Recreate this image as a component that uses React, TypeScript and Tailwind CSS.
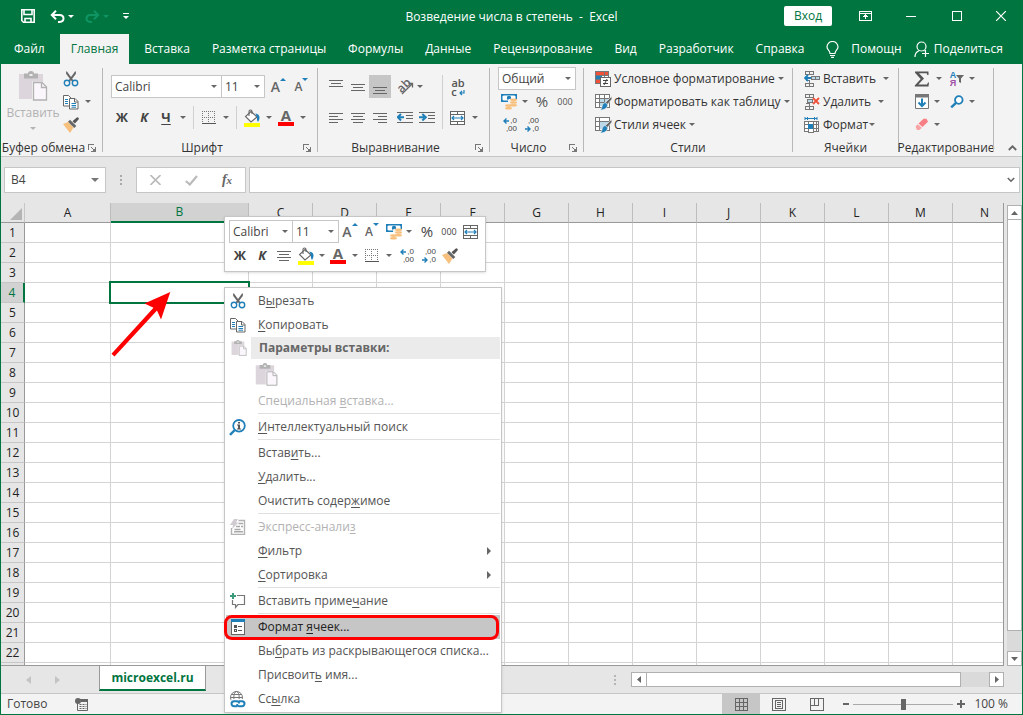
import React from 'react'
import clsx from 'clsx'

const columns = ['A', 'B', 'C', 'D', 'E', 'F', 'G', 'H', 'I', 'J', 'K', 'L', 'M', 'N']
const rows = Array.from({ length: 22 }, (_, i) => i + 1)

const ribbonTabs = [
    'Файл',
    'Главная',
    'Вставка',
    'Разметка страницы',
    'Формулы',
    'Данные',
    'Рецензирование',
    'Вид',
    'Разработчик',
    'Справка',
]

/* ---------- icons ---------- */

function Caret({ className = 'w-3', light = false }: { className?: string; light?: boolean }) {
    return (
        <span className={clsx('flex shrink-0 items-center justify-center', className)}>
            <svg width="6" height="3" viewBox="0 0 6 3" fill={light ? '#b5b5b5' : '#666'}>
                <path d="M0 0h6L3 3z" />
            </svg>
        </span>
    )
}

function ScissorsIcon() {
    return (
        <svg width="16" height="16" viewBox="0 0 16 16" fill="none">
            <path d="M3 0.5 L4 0.5 L10.5 9.5 L9 10.5 L3.2 3z" fill="#666" />
            <path d="M13 0.5 L12 0.5 L5.5 9.5 L7 10.5 L12.8 3z" fill="#666" />
            <circle cx="4" cy="12" r="2.7" stroke="#1f7fb8" strokeWidth="1.4" />
            <circle cx="12" cy="12" r="2.7" stroke="#1f7fb8" strokeWidth="1.4" />
        </svg>
    )
}

function CopyIcon() {
    return (
        <svg width="16" height="16" viewBox="0 0 16 16" fill="none">
            <path d="M0.5 1.5h5l3 3v7.5h-8z" fill="#fff" stroke="#666" />
            <path d="M2 5.5h3M2 7.5h3M2 9.5h3" stroke="#1f7fb8" />
            <path d="M6.5 4.5h5.5l3 3v7.5h-8.5z" fill="#fff" stroke="#666" />
            <path d="M11.5 4.5v3.5h3.5" stroke="#666" />
            <path d="M8.5 9.5h4.5M8.5 11.5h4.5M8.5 13.2h4.5" stroke="#1f7fb8" />
        </svg>
    )
}

function PasteIcon({ size = 30 }: { size?: number }) {
    return (
        <svg width={size} height={size} viewBox="0 0 30 30" fill="none">
            <path d="M1 3h24v25H1z" fill="#dcd6dc" />
            <path d="M6 2.5h4q0-2.5 3-2.5t3 2.5h4v5H6z" fill="#b2b2b2" />
            <path d="M11.5 3h3v2h-3z" fill="#eee" />
            <path d="M14 10.5h10.5l5.5 5.5v14H14z" fill="#f3f3f3" />
            <path d="M15.5 11.5h8.500l4.500 4.500v13h-13z" fill="#fbf6fb" stroke="#b2b2b2" strokeWidth="1.3" />
            <path d="M23.5 11.5v5h5" stroke="#b2b2b2" strokeWidth="1.3" />
        </svg>
    )
}

function BrushIcon() {
    return (
        <svg width="16" height="16" viewBox="0 0 16 16">
            <path d="M0 7l5-2 5.5 5.500-3.500 5.500z" fill="#f7c07c" />
            <path d="M5 4.800l2-2 6.300 6.200-2 2z" fill="#666" />
            <path d="M9.5 4.200L13.500.8a1.300 1.300 0 0 1 2 1.700l-3.600 4.100z" fill="#555" />
        </svg>
    )
}

function BucketIcon() {
    return (
        <svg width="18" height="18" viewBox="0 0 18 18" fill="none">
            <path d="M8 2.500l6 5.500-6 5-5.500-5.500z" fill="#fff" stroke="#666" strokeWidth="1.1" />
            <path d="M6 7V2.500Q6 1 7.500 1T9 2.500V5" stroke="#666" strokeWidth="1.1" />
            <path d="M12.3 4.500q4.500.5 4.200 4.500-.2 2.500-1.500 4-1.500-2-1-5z" fill="#1f7fb8" />
            <path d="M1 14h16v4H1z" fill="#ffff00" />
        </svg>
    )
}

function FontColor() {
    return (
        <span className="flex w-4 flex-col items-center">
            <span className="h-3 text-[15px] font-bold leading-3 text-[#666]">A</span>
            <span className="mt-px h-1 w-4 bg-[#ff0000]" />
        </span>
    )
}

function GrowFont({ down = false }: { down?: boolean }) {
    return (
        <span className="flex items-start">
            <span className={clsx('pt-px font-semibold leading-4 text-[#666]', down ? 'text-xs' : 'text-sm')}>A</span>
            <svg width="6" height="3" viewBox="0 0 6 3" fill="#1f7fb8">
                <path d={down ? 'M0 0h6L3 3z' : 'M0 3h6L3 0z'} />
            </svg>
        </span>
    )
}

function BordersIcon() {
    return (
        <svg width="14" height="14" viewBox="0 0 14 14" stroke="#777" fill="none" shapeRendering="crispEdges">
            <path d="M0 .5h13M0 6.500h13M.5 0v13M6.500 0v13M12.500 0v13" strokeDasharray="1 1" />
            <path d="M0 12.500h14" stroke="#555" />
        </svg>
    )
}

// each line is [x, y, width]
function LinesIcon({ lines }: { lines: number[][] }) {
    return (
        <svg width="16" height="14" viewBox="0 0 16 14" fill="#666" shapeRendering="crispEdges">
            {lines.map(([x, y, w]) => (
                <rect key={y} x={x} y={y} width={w} height="1" />
            ))}
        </svg>
    )
}

const topLines = [[1, 0, 14], [3, 3, 10], [1, 6, 14]]
const middleLines = [[1, 4, 14], [3, 7, 10], [1, 10, 14]]
const bottomLines = [[1, 7, 14], [3, 10, 10], [1, 13, 14]]
const leftLines = [[1, 2, 14], [1, 5, 9], [1, 8, 14], [1, 11, 9]]
const centerLines = [[1, 2, 14], [3, 5, 10], [1, 8, 14], [3, 11, 10]]
const rightLines = [[1, 2, 14], [6, 5, 9], [1, 8, 14], [6, 11, 9]]

function IndentIcon({ right = false }: { right?: boolean }) {
    return (
        <svg width="16" height="14" viewBox="0 0 16 14" fill="none">
            <path d="M0 1.500h16M9 4.500h7M9 7.500h7M0 11.500h16" stroke="#666" shapeRendering="crispEdges" />
            {right ? (
                <path d="M0 6.200h5M3.300 3l3.500 3.200-3.500 3.300" stroke="#1f7fb8" strokeWidth="2" />
            ) : (
                <path d="M7 6.200H2M4 3L.8 6.200 4 9.500" stroke="#1f7fb8" strokeWidth="2" />
            )}
        </svg>
    )
}

function OrientationIcon() {
    return (
        <span className="relative flex h-4 w-4 items-center justify-center">
            <span className="-rotate-45 pb-1 text-xs font-semibold leading-3 text-[#666]">ab</span>
            <svg className="absolute inset-0" width="17" height="16" viewBox="0 0 17 16" fill="none" stroke="#666">
                <path d="M5 15L15.500 4.500M11.500 4.500h4v4" strokeWidth="1.3" />
            </svg>
        </span>
    )
}

function WrapIcon() {
    return (
        <span className="flex flex-col text-[11px] font-semibold leading-[9px] text-[#555]">
            <span>ab</span>
            <span className="flex items-end gap-0.5">
                c
                <svg width="6" height="6" viewBox="0 0 6 6" fill="none" stroke="#1f7fb8" strokeWidth="1.2">
                    <path d="M5 0v3H1M3 1L1 3l2 2" />
                </svg>
            </span>
        </span>
    )
}

function MergeIcon() {
    return (
        <svg width="16" height="16" viewBox="0 0 16 16" fill="none">
            <path d="M.5 1.500h14v13H.5zM.5 4.500h14M.5 11.500h14M7.500 1.500v3M7.500 11.500v3" fill="#fff" stroke="#666" shapeRendering="crispEdges" />
            <path d="M2 8h11M4 6L2 8l2 2M11 6l2 2-2 2" stroke="#1f7fb8" strokeWidth="1.2" />
        </svg>
    )
}

function MoneyIcon() {
    return (
        <svg width="18" height="17" viewBox="0 0 18 17" fill="none">
            <path d="M1 1h16v8H1z" fill="#1f7fb8" />
            <path d="M2.500 3.500l1-1h11l1 1v3l-1 1h-11l-1-1z" fill="#fff" />
            <circle cx="9" cy="5" r="2.200" fill="#1f7fb8" />
            <path d="M8 9.500V7q0-1.500 4.500-1.500T17 7v2.500z" fill="#f3f3f3" />
            <ellipse cx="13.500" cy="6.800" rx="3.500" ry="1.300" fill="#f7c07c" />
            <ellipse cx="13.500" cy="9.500" rx="3.500" ry="1.300" fill="#f7c07c" />
            <ellipse cx="13.500" cy="12.200" rx="3.500" ry="1.300" fill="#f7c07c" />
            <ellipse cx="8.500" cy="12.600" rx="3.500" ry="1.300" fill="#f7c07c" />
            <ellipse cx="8.500" cy="15.300" rx="3.500" ry="1.300" fill="#f7c07c" />
        </svg>
    )
}

function DecimalIcon({ less = false }: { less?: boolean }) {
    const arrow = (
        <svg className="mr-px" width="6" height="6" viewBox="0 0 6 6" fill="none" stroke="#1f7fb8" strokeWidth="1.4">
            <path d={less ? 'M0 3h5M2.500.5L5 3 2.500 5.500' : 'M6 3H1M3.500.5L1 3l2.500 2.500'} />
        </svg>
    )
    return (
        <span className="flex w-4 flex-col items-end font-['Liberation_Sans',sans-serif] text-[8px] leading-2 text-[#444]">
            <span className="flex items-center">{!less && arrow}{less ? ',00' : ',0'}</span>
            <span className="flex items-center">{less && arrow}{less ? ',0' : ',00'}</span>
        </span>
    )
}

function ConditionalIcon() {
    return (
        <svg width="16" height="16" viewBox="0 0 16 16" fill="none" shapeRendering="crispEdges">
            <path d="M.5.5h13v12H.5zM.5 4.500h13M.5 8.500h13M5.500.5v12M9.500.5v12" fill="#fff" stroke="#777" />
            <path d="M1 1h8v3H1zM1 9h4v3H1z" fill="#f0513a" />
            <path d="M1 5h6v3H1z" fill="#1f7fb8" />
            <path d="M10 1h3v3h-3z" fill="#f0513a" />
            <path d="M5.500 6.500h10v9h-10z" fill="#fff" stroke="#666" />
            <path d="M8 9.500h5M8 12.500h5" stroke="#444" />
            <path d="M12 8l-3 6" stroke="#444" shapeRendering="auto" />
        </svg>
    )
}

function FormatTableIcon({ single = false }: { single?: boolean }) {
    return (
        <svg width="17" height="16" viewBox="0 0 17 16" fill="none">
            <g shapeRendering="crispEdges">
                <path d="M.5.5h14v13H.5z" fill="#fff" stroke="#777" />
                <path d="M5 4h8v8H5z" fill="#bcd9ea" />
                <path d={single ? 'M.5 4.500h14M.5 9.500h4M4.500.5v13' : 'M.5 4.500h14M.5 8.500h14M4.500.5v13M9.500.5v13'} stroke="#777" />
            </g>
            <path d="M16.500 2.500L10 9l2 2 5-6z" fill="#666" stroke="#f3f3f3" strokeWidth=".6" />
            <path d="M10 8.500q3 1 2.500 3.500-1.500 4-7.500 4 2-1.500 2-3.500.5-3.500 3-4z" fill="#1f7fb8" stroke="#f3f3f3" strokeWidth=".6" />
        </svg>
    )
}

function InsertCellsIcon() {
    return (
        <svg width="16" height="16" viewBox="0 0 16 16" fill="none">
            <path d="M1.500.5h8v3h-8zM5.500.5v3M1.500 12.500h8v3h-8zM5.500 12.500v3M1.500 9.500h4v3" stroke="#777" shapeRendering="crispEdges" />
            <path d="M7.500 5.500h8v3h-8zM11.500 5.500v3" fill="#bcd9ea" stroke="#777" shapeRendering="crispEdges" />
            <path d="M7 7H2M4 4L1 7l3 3" stroke="#1f7fb8" strokeWidth="1.8" />
        </svg>
    )
}

function DeleteCellsIcon() {
    return (
        <svg width="16" height="16" viewBox="0 0 16 16" fill="none">
            <path d="M1.500.5h8v3h-8zM5.500.5v3M1.500 12.500h8v3h-8zM5.500 12.500v3M1.500 9.500h4v3" stroke="#777" shapeRendering="crispEdges" />
            <path d="M3.500 5.500h5v3h-5z" fill="#bcd9ea" stroke="#777" shapeRendering="crispEdges" />
            <path d="M9 4l6 6M15 4l-6 6" stroke="#f0513a" strokeWidth="1.8" />
        </svg>
    )
}

function FormatCellsIcon() {
    return (
        <svg width="16" height="16" viewBox="0 0 16 16" fill="none">
            <path d="M1 1.500h12M1 0v3M13 0v3M4 0L2.500 1.500 4 3M10 0l1.500 1.500L10 3" stroke="#1f7fb8" />
            <path d="M.5 4.500h14v10H10l-1 1H5l-1-1H.5zM.5 7.500h14M.5 11.500h14M4.500 4.500v10M9.500 4.500v10M12.500 4.500v10" fill="#fff" stroke="#777" shapeRendering="crispEdges" />
            <path d="M4 7h5v5H4z" fill="#1f7fb8" />
        </svg>
    )
}

function SigmaIcon() {
    return (
        <svg width="16" height="16" viewBox="0 0 16 16">
            <path d="M1 .5h13.500V4h-1.200l-.6-1.700H5L10 7.500 4.300 13.500H13l1-2h1l-.5 4H.8v-1L6.700 8 1 1.800z" fill="#555" />
        </svg>
    )
}

function SortFilterIcon() {
    return (
        <span className="flex items-center">
            <span className="flex flex-col font-['Liberation_Sans',sans-serif] text-[9px] font-bold leading-2">
                <span className="text-[#1f7fb8]">А</span>
                <span className="text-[#9b4fa5]">Я</span>
            </span>
            <svg width="8" height="8" viewBox="0 0 8 8" fill="#666">
                <path d="M0 0h8L5 3.500V8L3 7V3.500z" />
            </svg>
        </span>
    )
}

function FillDownIcon() {
    return (
        <svg width="14" height="15" viewBox="0 0 14 15" fill="none">
            <path d="M.5.5h13v14H.5z" fill="#fff" stroke="#777" />
            <path d="M0 0h14v3.500H0z" fill="#777" />
            <path d="M7 4.500V12M3.500 8.500L7 12l3.500-3.500" stroke="#1f7fb8" strokeWidth="2" />
        </svg>
    )
}

function SearchIcon() {
    return (
        <svg width="14" height="14" viewBox="0 0 14 14" fill="none" stroke="#1f7fb8">
            <circle cx="8.800" cy="5" r="3.800" strokeWidth="1.8" fill="#fff" />
            <path d="M6 7.800L1.200 12.300" strokeWidth="2.4" />
        </svg>
    )
}

function EraserIcon() {
    return (
        <svg width="14" height="13" viewBox="0 0 14 13">
            <path d="M8.500.8h3l1.500 3L7.500 9 3.500 5.500z" fill="#f77f85" />
            <path d="M2.800 6.200l4 3.600L4.500 12H2L.8 9.500V8z" fill="#f9a3a7" />
        </svg>
    )
}

function LauncherIcon() {
    return (
        <svg width="8" height="8" viewBox="0 0 8 8" fill="none" stroke="#777" shapeRendering="crispEdges">
            <path d="M.5 6V.5H6M3 3l3 3M7.500 3v4.500H3" />
            <path d="M4 7h3V4z" fill="#777" stroke="none" />
        </svg>
    )
}

function SmartLookupIcon() {
    return (
        <svg width="17" height="17" viewBox="0 0 17 17" fill="none">
            <circle cx="10" cy="6.800" r="5.800" stroke="#1f7fb8" strokeWidth="1.8" />
            <path d="M5.800 11L1 15.800" stroke="#1f7fb8" strokeWidth="2.4" />
            <path d="M9 3h2v1.500H9zM8 5.500h3v4h1v1H8v-1h1v-3H8z" fill="#555" />
        </svg>
    )
}

function QuickAnalysisIcon() {
    return (
        <svg width="16" height="16" viewBox="0 0 16 16" fill="none">
            <path d="M1.500 9v6.500h13V1.500H8.500" stroke="#b2b2b2" strokeWidth="1.4" />
            <path d="M4 0h4L6 3.500h2.500L2 10l1.200-4H0z" fill="#d0cbd0" />
            <path d="M8.500 4.500H13M6 7.500h4M11 7.500h2M4.500 10.500h6M4 12.800h9" stroke="#a9a9a9" strokeWidth="1.4" />
        </svg>
    )
}

function CommentIcon() {
    return (
        <svg width="16" height="16" viewBox="0 0 16 16" fill="none">
            <path d="M7 2.500h7.500v9H8L5.500 14.500V11.500h-3V7" stroke="#777" strokeWidth="1.2" />
            <path d="M3 0v6M0 3h6" stroke="#3d9b7c" strokeWidth="2" />
        </svg>
    )
}

function FormatDialogIcon() {
    return (
        <svg width="14" height="16" viewBox="0 0 14 16" fill="none" shapeRendering="crispEdges">
            <path d="M.5.5h13v15H.5z" fill="#fff" stroke="#666" />
            <path d="M0 0h14v3H0z" fill="#1f7fb8" />
            <path d="M3 6h3v3H3z" fill="#555" />
            <path d="M3.500 10.500h2v2h-2z" stroke="#555" />
            <path d="M7 7.500h4M7 11.500h4" stroke="#555" />
        </svg>
    )
}

function LinkIcon() {
    return (
        <svg width="16" height="17" viewBox="0 0 16 17" fill="none">
            <circle cx="6.500" cy="6.500" r="6" stroke="#777" />
            <ellipse cx="6.500" cy="6.500" rx="2.700" ry="6" stroke="#777" />
            <path d="M.5 6.500h12M1.500 3.500h10" stroke="#777" />
            <rect x="0" y="8" width="16" height="9" rx="4.500" fill="#fff" />
            <path d="M7.500 15.300H4a2.300 2.300 0 0 1 0-5h3.200q1.800.3 2 2.200M8.500 10.300H12a2.300 2.300 0 0 1 0 5H9q-1.800-.3-2-2.200" stroke="#1f7fb8" strokeWidth="2" />
        </svg>
    )
}

/* ---------- small controls ---------- */

type ToolButtonProps = { label: string; className?: string; children: React.ReactNode }

function ToolButton({ label, className = 'w-[22px]', children }: ToolButtonProps) {
    return (
        <button type="button" aria-label={label} className={clsx('flex h-[23px] shrink-0 items-center justify-center', className)}>
            {children}
        </button>
    )
}

function Combo({ label, value, className }: { label: string; value: string; className: string }) {
    return (
        <div className={clsx('relative h-[23px] shrink-0', className)}>
            <select aria-label={label} className="block h-full w-full appearance-none border border-[#c6c6c6] bg-white pl-[3px] text-xs text-[#444]">
                <option>{value}</option>
            </select>
            <span className="pointer-events-none absolute inset-y-0 right-0 flex items-center">
                <Caret className="w-4" />
            </span>
        </div>
    )
}

type RibbonGroupProps = { title: string; className: string; launcher?: boolean; children: React.ReactNode }

function RibbonGroup({ title, className, launcher = false, children }: RibbonGroupProps) {
    return (
        <section className={clsx('flex shrink-0 flex-col', className)}>
            <div className="flex-1">{children}</div>
            <div className="flex h-4 items-center justify-center">
                <h2 className={clsx('whitespace-nowrap text-center text-xs leading-4 text-[#333]', launcher && 'flex-1')}>{title}</h2>
                {launcher && (
                    <button type="button" aria-label={`${title}: параметры`} className="mr-1 flex w-3 justify-center">
                        <LauncherIcon />
                    </button>
                )}
            </div>
        </section>
    )
}

const Divider = () => <div className="my-1 w-px shrink-0 bg-[#b8b8b8]" />

function TextButton({ icon, text, gap = 'w-3' }: { icon: React.ReactNode; text: string; gap?: string }) {
    return (
        <button type="button" className="flex h-[23px] items-center whitespace-nowrap text-xs text-[#333]">
            <span className="mr-0.5 flex w-[17px]">{icon}</span>
            {text}
            <Caret className={gap} />
        </button>
    )
}

/* ---------- window parts ---------- */

function TitleBar() {
    return (
        <div className="grid h-8 grid-cols-[1fr_auto_1fr] items-center text-white">
            <div className="flex items-center pl-[17px]">
                <ToolButton label="Сохранить" className="w-5">
                    <svg width="14" height="14" viewBox="0 0 14 14" fill="none" stroke="#fff" strokeWidth="1.6">
                        <path d="M.8.8h12.400v12.400H2.500L.8 11.500zM3 1v4.500h8V1M4 13V9.500h6V13" />
                    </svg>
                </ToolButton>
                <ToolButton label="Отменить" className="ml-2 w-[22px]">
                    <svg width="15" height="13" viewBox="0 0 15 13" fill="none" stroke="#fff" strokeWidth="2">
                        <path d="M1.500 5h8q4 .2 4 3.500T9.500 12H8M6 .8L1.800 5 6 9.200" />
                    </svg>
                </ToolButton>
                <svg width="6" height="3" viewBox="0 0 6 3" fill="#fff"><path d="M0 0h6L3 3z" /></svg>
                <ToolButton label="Вернуть" className="ml-[7px] w-[22px]">
                    <svg width="15" height="13" viewBox="0 0 15 13" fill="none" stroke="#0f9463" strokeWidth="2">
                        <path d="M13.500 5h-8q-4 .2-4 3.500T5.500 12H7M9 .8L13.200 5 9 9.200" />
                    </svg>
                </ToolButton>
                <svg width="6" height="3" viewBox="0 0 6 3" fill="#0f9463"><path d="M0 0h6L3 3z" /></svg>
                <ToolButton label="Настройка панели" className="ml-[7px] w-5">
                    <svg width="6" height="6" viewBox="0 0 6 6" fill="#fff"><path d="M0 0h6v1H0zM0 3h6L3 6z" /></svg>
                </ToolButton>
            </div>
            <h1 className="whitespace-pre pt-px text-xs">Возведение числа в степень  -  Excel</h1>
            <div className="flex items-center justify-end">
                <button type="button" className="mr-2.5 h-5 w-12 rounded-xs bg-white text-xs text-[#007540]">Вход</button>
                <ToolButton label="Параметры ленты" className="w-[46px]">
                    <svg width="13" height="10" viewBox="0 0 13 10" fill="none" stroke="#fff" shapeRendering="crispEdges">
                        <path d="M.5.5h12v9H.5zM.5 2.500h12M6.500 4v4M4.500 6l2-2 2 2" />
                    </svg>
                </ToolButton>
                <ToolButton label="Свернуть" className="w-[46px]">
                    <span className="h-px w-2.5 bg-white" />
                </ToolButton>
                <ToolButton label="Развернуть" className="w-[46px]">
                    <span className="h-2.5 w-2.5 border border-white" />
                </ToolButton>
                <ToolButton label="Закрыть" className="w-[42px]">
                    <svg width="10" height="10" viewBox="0 0 10 10" stroke="#fff" strokeWidth="1.2"><path d="M0 0l10 10M10 0L0 10" /></svg>
                </ToolButton>
            </div>
        </div>
    )
}

function RibbonTabs() {
    return (
        <nav className="flex h-8 items-end whitespace-nowrap pl-0.5 text-xs text-white">
            {ribbonTabs.map((tab) => (
                <button
                    key={tab}
                    type="button"
                    className={clsx('h-[30px] px-[11px]', tab === 'Главная' && 'mx-1 bg-[#f3f3f3] text-[#007540]')}
                >
                    {tab}
                </button>
            ))}
            <button type="button" className="ml-[11px] flex h-[30px] items-center gap-3">
                <svg width="13" height="17" viewBox="0 0 13 17" fill="none" stroke="#fff" strokeWidth="1.2">
                    <path d="M4 12.500Q4 11 2.500 9.200 1 7.500 1 6a5.400 5.400 0 0 1 11 0q0 1.500-1.500 3.200Q9 11 9 12.500zM4 14.500h5M5 16.300h3" />
                </svg>
                Помощн
            </button>
            <button type="button" className="ml-auto mr-[19px] flex h-[30px] items-center gap-1">
                <svg width="16" height="17" viewBox="0 0 16 17" fill="none" stroke="#fff" strokeWidth="1.2">
                    <circle cx="7.500" cy="5.500" r="4.500" />
                    <path d="M1 16q0-5 4.500-6.500M9.500 9.500l1 .6M8 12.500h7M11.500 9v7" />
                </svg>
                Поделиться
            </button>
        </nav>
    )
}

function Ribbon() {
    return (
        <div className="flex h-[93px] shrink-0 overflow-hidden border-b border-[#c6c6c6] bg-[#f3f3f3]">
            <RibbonGroup title="Буфер обмена" className="w-[101px]" launcher>
                <div className="flex pl-2 pt-[3px]">
                    <button type="button" disabled className="flex w-[48px] flex-col items-center pt-1 text-xs text-[#b2b2b2]">
                        <PasteIcon />
                        <span className="mt-1 leading-4">Вставить</span>
                        <span className="mt-1.5"><Caret light /></span>
                    </button>
                    <div className="ml-[3px] flex flex-col">
                        <ToolButton label="Вырезать"><ScissorsIcon /></ToolButton>
                        <span className="flex">
                            <ToolButton label="Копировать"><CopyIcon /></ToolButton>
                            <Caret />
                        </span>
                        <ToolButton label="Формат по образцу"><BrushIcon /></ToolButton>
                    </div>
                </div>
            </RibbonGroup>
            <Divider />
            <RibbonGroup title="Шрифт" className="w-[214px]" launcher>
                <div className="flex flex-col gap-2 pl-2 pt-[11px]">
                    <div className="flex">
                        <Combo label="Шрифт" value="Calibri" className="w-[111px]" />
                        <Combo label="Размер шрифта" value="11" className="-ml-px w-11" />
                        <ToolButton label="Увеличить размер" className="ml-0.5 w-[23px]"><GrowFont /></ToolButton>
                        <ToolButton label="Уменьшить размер" className="w-[23px]"><GrowFont down /></ToolButton>
                    </div>
                    <div className="flex text-[13px] text-[#444]">
                        <ToolButton label="Полужирный"><b>Ж</b></ToolButton>
                        <ToolButton label="Курсив"><b className="italic">К</b></ToolButton>
                        <ToolButton label="Подчёркнутый"><b className="underline underline-offset-2">Ч</b></ToolButton>
                        <Caret />
                        <div className="mx-1 w-px bg-[#d0d0d0]" />
                        <ToolButton label="Границы"><BordersIcon /></ToolButton>
                        <Caret />
                        <div className="mx-1 w-px bg-[#d0d0d0]" />
                        <ToolButton label="Цвет заливки"><BucketIcon /></ToolButton>
                        <Caret />
                        <ToolButton label="Цвет текста"><FontColor /></ToolButton>
                        <Caret />
                    </div>
                </div>
            </RibbonGroup>
            <Divider />
            <RibbonGroup title="Выравнивание" className="w-[171px]" launcher>
                <div className="flex pl-[7px] pt-[11px]">
                    <div className="flex w-[117px] flex-col gap-2">
                        <div className="flex">
                            <ToolButton label="По верхнему краю"><LinesIcon lines={topLines} /></ToolButton>
                            <ToolButton label="По середине"><LinesIcon lines={middleLines} /></ToolButton>
                            <ToolButton label="По нижнему краю" className="w-[22px] bg-[#c6c6c6]"><LinesIcon lines={bottomLines} /></ToolButton>
                            <ToolButton label="Ориентация" className="ml-[3px] w-[22px]"><OrientationIcon /></ToolButton>
                            <Caret className="w-2" />
                        </div>
                        <div className="flex">
                            <ToolButton label="По левому краю"><LinesIcon lines={leftLines} /></ToolButton>
                            <ToolButton label="По центру"><LinesIcon lines={centerLines} /></ToolButton>
                            <ToolButton label="По правому краю"><LinesIcon lines={rightLines} /></ToolButton>
                            <ToolButton label="Уменьшить отступ" className="ml-[3px] w-[22px]"><IndentIcon /></ToolButton>
                            <ToolButton label="Увеличить отступ"><IndentIcon right /></ToolButton>
                        </div>
                    </div>
                    <div className="w-px bg-[#d0d0d0]" />
                    <div className="ml-1 flex flex-col gap-2">
                        <ToolButton label="Переносить текст"><WrapIcon /></ToolButton>
                        <span className="flex">
                            <ToolButton label="Объединить"><MergeIcon /></ToolButton>
                            <Caret />
                        </span>
                    </div>
                </div>
            </RibbonGroup>
            <Divider />
            <RibbonGroup title="Число" className="w-[93px]" launcher>
                <div className="pl-2 pt-[3px]">
                    <Combo label="Числовой формат" value="Общий" className="w-[78px]" />
                    <div className="flex text-[#555]">
                        <ToolButton label="Финансовый формат"><MoneyIcon /></ToolButton>
                        <Caret className="w-2.5" />
                        <ToolButton label="Процентный формат" className="w-6"><span className="text-[15px]">%</span></ToolButton>
                        <ToolButton label="Формат с разделителями"><span className="text-[9px]">000</span></ToolButton>
                    </div>
                    <div className="flex">
                        <ToolButton label="Увеличить разрядность"><DecimalIcon /></ToolButton>
                        <ToolButton label="Уменьшить разрядность"><DecimalIcon less /></ToolButton>
                    </div>
                </div>
            </RibbonGroup>
            <Divider />
            <RibbonGroup title="Стили" className="w-[208px]">
                <div className="pl-[11px] pt-[3px]">
                    <TextButton icon={<ConditionalIcon />} text="Условное форматирование" />
                    <TextButton icon={<FormatTableIcon />} text="Форматировать как таблицу" />
                    <TextButton icon={<FormatTableIcon single />} text="Стили ячеек" />
                </div>
            </RibbonGroup>
            <Divider />
            <RibbonGroup title="Ячейки" className="w-[105px]">
                <div className="pl-[11px] pt-[3px]">
                    <TextButton icon={<InsertCellsIcon />} text="Вставить" gap="w-5" />
                    <TextButton icon={<DeleteCellsIcon />} text="Удалить" gap="w-5" />
                    <TextButton icon={<FormatCellsIcon />} text="Формат" gap="w-2" />
                </div>
            </RibbonGroup>
            <Divider />
            <RibbonGroup title="Редактирование" className="w-[94px]">
                <div className="grid grid-cols-[35px_1fr] pl-3 pt-[3px]">
                    <span className="flex"><ToolButton label="Сумма"><SigmaIcon /></ToolButton><Caret /></span>
                    <span className="flex"><ToolButton label="Сортировка и фильтр"><SortFilterIcon /></ToolButton><Caret className="w-2" /></span>
                    <span className="flex"><ToolButton label="Заполнить"><FillDownIcon /></ToolButton><Caret className="w-2" /></span>
                    <span className="flex"><ToolButton label="Найти и выделить"><SearchIcon /></ToolButton><Caret className="w-2" /></span>
                    <span className="flex"><ToolButton label="Очистить"><EraserIcon /></ToolButton><Caret className="w-2" /></span>
                </div>
            </RibbonGroup>
            <Divider />
            <div className="flex flex-1 items-end justify-center pb-[5px] pl-2">
                <button type="button" aria-label="Свернуть ленту">
                    <svg width="9" height="6" viewBox="0 0 9 6" fill="none" stroke="#666" strokeWidth="1.8"><path d="M.8 5L4.500 1.300 8.200 5" /></svg>
                </button>
            </div>
        </div>
    )
}

function FormulaBar() {
    return (
        <div className="flex h-[46px] shrink-0 items-start bg-[#e6e6e6] pl-[3px] pr-0.5 pt-2.5">
            <div className="flex h-[26px] w-[102px] items-center border border-[#c6c6c6] bg-white">
                <input aria-label="Имя" defaultValue="B4" className="w-0 flex-1 pl-1.5 text-xs text-[#444]" />
                <button type="button" aria-label="Список имён" className="flex w-5 justify-center">
                    <svg width="8" height="4" viewBox="0 0 8 4" fill="#777"><path d="M0 0h8L4 4z" /></svg>
                </button>
            </div>
            <div className="flex h-[26px] w-[30px] flex-col items-center justify-center gap-0.5">
                <i className="h-0.5 w-0.5 bg-[#aaa]" />
                <i className="h-0.5 w-0.5 bg-[#aaa]" />
                <i className="h-0.5 w-0.5 bg-[#aaa]" />
            </div>
            <div className="flex h-[26px] w-[110px] items-center border border-[#c6c6c6] bg-white">
                <ToolButton label="Отмена" className="w-9">
                    <svg width="11" height="10" viewBox="0 0 11 10" stroke="#bbb" strokeWidth="1.6"><path d="M.5 0l10 10M10.500 0l-10 10" /></svg>
                </ToolButton>
                <ToolButton label="Ввод" className="w-9">
                    <svg width="13" height="11" viewBox="0 0 13 11" fill="none" stroke="#bbb" strokeWidth="2.2"><path d="M.8 6l4 3.500L12 1" /></svg>
                </ToolButton>
                <ToolButton label="Вставить функцию" className="w-9">
                    <span className="font-['Liberation_Serif',serif] text-sm font-bold italic leading-4 text-[#666]">f<span className="text-[11px]">x</span></span>
                </ToolButton>
            </div>
            <div className="ml-[3px] flex h-[26px] flex-1 items-center border border-[#c6c6c6] bg-white">
                <input aria-label="Строка формул" className="w-0 flex-1 px-1 text-xs" />
                <button type="button" aria-label="Развернуть строку формул" className="flex w-4 justify-center">
                    <svg width="8" height="6" viewBox="0 0 8 6" fill="none" stroke="#666" strokeWidth="1.6"><path d="M.8 1L4 4.200 7.200 1" /></svg>
                </button>
            </div>
        </div>
    )
}

function Sheet() {
    return (
        <div className="flex min-h-0 flex-1 bg-[#e6e6e6]">
            <div className="relative min-w-0 flex-1 overflow-hidden border-b border-r border-[#999]">
                <table className="w-[1016px] table-fixed border-separate border-spacing-0 bg-white text-xs leading-4 text-[#222]">
                    <colgroup>
                        <col className="w-6" />
                        {columns.map((c) => (
                            <col key={c} className={c === 'A' ? 'w-[86px]' : c === 'B' ? 'w-[138px]' : 'w-16'} />
                        ))}
                    </colgroup>
                    <thead>
                        <tr>
                            <th className="h-5 border-b border-r border-b-[#999] border-r-[#c6c6c6] bg-[#e6e6e6] p-0">
                                <svg className="ml-auto mr-0.5 mt-0.5" width="12" height="12" viewBox="0 0 12 12" fill="#b4b4b4"><path d="M12 0v12H0z" /></svg>
                            </th>
                            {columns.map((c) => (
                                <th
                                    key={c}
                                    className={clsx(
                                        'h-5 border-r border-r-[#bdbdbd] p-0 font-normal',
                                        c === 'B' ? 'border-b-2 border-b-[#007540] bg-[#d2d2d2] text-[#007540]' : 'border-b border-b-[#999] bg-[#e6e6e6]',
                                    )}
                                >
                                    {c}
                                </th>
                            ))}
                        </tr>
                    </thead>
                    <tbody>
                        {rows.map((r) => (
                            <tr key={r}>
                                <th
                                    className={clsx(
                                        'h-5 border-b border-b-[#c6c6c6] p-0 font-normal',
                                        r === 4 ? 'border-r-2 border-r-[#007540] bg-[#d2d2d2] text-[#007540]' : 'border-r border-r-[#999] bg-[#e6e6e6]',
                                    )}
                                >
                                    {r}
                                </th>
                                {columns.map((c) => (
                                    <td key={c} className="relative border-b border-r border-[#d4d4d4] p-0">
                                        {r === 4 && c === 'B' && <div className="absolute -inset-0.5 z-10 border-2 border-[#007540]" />}
                                    </td>
                                ))}
                            </tr>
                        ))}
                        <tr>
                            <th className="h-5 border-r border-r-[#999] bg-[#e6e6e6] p-0" />
                            {columns.map((c) => (
                                <td key={c} className="border-r border-[#d4d4d4] p-0" />
                            ))}
                        </tr>
                    </tbody>
                </table>
                <svg className="absolute left-[109px] top-[87px] z-20" width="64" height="68" viewBox="0 0 64 68" fill="#ff0000">
                    <path d="M60.300 2L34.500 13.500l9 4.200L1.500 63.800l3 2.800L47 20.500l4 9z" />
                </svg>
            </div>
            <div className="ml-[3px] mt-0.5 flex w-[15px] flex-col bg-[#dadada]">
                <button type="button" aria-label="Вверх" className="flex h-[15px] items-center justify-center border border-[#b0b0b0] bg-white">
                    <svg width="7" height="4" viewBox="0 0 7 4" fill="#666"><path d="M0 4h7L3.500 0z" /></svg>
                </button>
                <div className="-mt-px flex-1 border border-[#b0b0b0] bg-white" />
                <button type="button" aria-label="Вниз" className="mt-5 flex h-[15px] items-center justify-center border border-[#b0b0b0] bg-white">
                    <svg width="7" height="4" viewBox="0 0 7 4" fill="#666"><path d="M0 0h7L3.500 4z" /></svg>
                </button>
            </div>
        </div>
    )
}

function SheetTabs() {
    return (
        <div className="flex h-7 shrink-0 items-center border-b border-[#c6c6c6] bg-[#e6e6e6] pr-[18px]">
            <div className="flex w-[98px] gap-6 pl-[25px]">
                <button type="button" aria-label="Предыдущий лист">
                    <svg width="5" height="8" viewBox="0 0 5 8" fill="#c4c4c4"><path d="M5 0v8L0 4z" /></svg>
                </button>
                <button type="button" aria-label="Следующий лист">
                    <svg width="5" height="8" viewBox="0 0 5 8" fill="#c4c4c4"><path d="M0 0v8l5-4z" /></svg>
                </button>
            </div>
            <button type="button" className="h-[25px] w-[107px] self-start border-x border-b-2 border-x-[#999] border-b-[#007540] bg-white text-xs font-bold text-[#007540]">
                microexcel.ru
            </button>
            <div className="ml-auto mr-[15px] flex flex-col gap-0.5">
                <i className="h-0.5 w-0.5 bg-[#b5b5b5]" />
                <i className="h-0.5 w-0.5 bg-[#b5b5b5]" />
                <i className="h-0.5 w-0.5 bg-[#b5b5b5]" />
            </div>
            <div className="flex h-[15px] w-[373px] bg-[#dadada]">
                <button type="button" aria-label="Влево" className="flex w-4 items-center justify-center border border-[#b0b0b0] bg-white">
                    <svg width="4" height="7" viewBox="0 0 4 7" fill="#666"><path d="M4 0v7L0 3.500z" /></svg>
                </button>
                <div className="-ml-px flex-1 border border-[#b0b0b0] bg-white" />
                <button type="button" aria-label="Вправо" className="ml-7 flex w-[15px] items-center justify-center border border-[#b0b0b0] bg-white">
                    <svg width="4" height="7" viewBox="0 0 4 7" fill="#666"><path d="M0 0v7l4-3.500z" /></svg>
                </button>
            </div>
        </div>
    )
}

function StatusBar() {
    return (
        <div className="flex h-5 shrink-0 items-center bg-[#f3f3f3] pl-1.5 pr-3.5 text-xs text-[#444]">
            <span>Готово</span>
            <button type="button" aria-label="Запись макроса" className="ml-7">
                <svg width="13" height="13" viewBox="0 0 13 13" fill="none">
                    <path d="M2.500 5v7.500h10v-11H5" stroke="#666" />
                    <path d="M6 1h7v3H6z" fill="#666" />
                    <path d="M4.500 6.500h7M4.500 8.500h7M4.500 10.500h7" stroke="#666" strokeDasharray="2 1" />
                    <circle cx="3" cy="3" r="3" fill="#666" />
                </svg>
            </button>
            <div className="ml-auto flex h-full">
                <ToolButton label="Обычный" className="h-full w-[38px] bg-[#c6c6c6]">
                    <svg width="13" height="13" viewBox="0 0 13 13" fill="none" stroke="#666" shapeRendering="crispEdges">
                        <path d="M.5.5h12v12H.5zM.5 4.500h12M.5 8.500h12M4.500.5v12M8.500.5v12" />
                    </svg>
                </ToolButton>
                <ToolButton label="Разметка страницы" className="h-full w-[38px]">
                    <svg width="14" height="13" viewBox="0 0 14 13" fill="none" stroke="#666" shapeRendering="crispEdges">
                        <path d="M.5.5h13v12H.5zM3.500 2.500h7v8h-7zM5 4.500h4M5 6.500h4M5 8.500h4" />
                    </svg>
                </ToolButton>
                <ToolButton label="Страничный режим" className="h-full w-[38px]">
                    <svg width="14" height="13" viewBox="0 0 14 13" fill="none" stroke="#666" shapeRendering="crispEdges">
                        <path d="M.5.5h13v12H.5zM4.500.5v7M.5 7.500h8M8.500.5v7" />
                    </svg>
                </ToolButton>
            </div>
            <button type="button" aria-label="Уменьшить" className="ml-1 flex w-3 justify-center">
                <span className="h-0.5 w-1.5 bg-[#666]" />
            </button>
            <input
                type="range"
                aria-label="Масштаб"
                className="mx-px h-3 w-[100px] appearance-none bg-[linear-gradient(#aaa,#aaa)] bg-[length:100%_1px] bg-center bg-no-repeat [&::-webkit-slider-thumb]:h-[11px] [&::-webkit-slider-thumb]:w-[5px] [&::-webkit-slider-thumb]:appearance-none [&::-webkit-slider-thumb]:bg-[#666]"
            />
            <button type="button" aria-label="Увеличить" className="flex w-3.5 justify-center">
                <svg width="8" height="8" viewBox="0 0 8 8" stroke="#666" strokeWidth="2"><path d="M4 0v8M0 4h8" /></svg>
            </button>
            <span className="ml-1.5">100 %</span>
        </div>
    )
}

function MiniToolbar() {
    return (
        <div className="absolute left-[223px] top-[216px] z-30 flex h-14 w-[262px] flex-col gap-px border border-[#c6c6c6] bg-white pl-1 pt-[3px] text-[#444] shadow-sm">
            <div className="flex">
                <Combo label="Шрифт мини-панели" value="Calibri" className="w-16" />
                <Combo label="Размер мини-панели" value="11" className="-ml-px w-[47px]" />
                <ToolButton label="Увеличить размер"><GrowFont /></ToolButton>
                <ToolButton label="Уменьшить размер"><GrowFont down /></ToolButton>
                <ToolButton label="Финансовый формат"><MoneyIcon /></ToolButton>
                <Caret className="w-2" />
                <ToolButton label="Процентный формат" className="ml-[3px] w-[22px]"><span className="text-[15px]">%</span></ToolButton>
                <ToolButton label="Формат с разделителями"><span className="text-[9px]">000</span></ToolButton>
                <ToolButton label="Объединить"><MergeIcon /></ToolButton>
            </div>
            <div className="flex text-[13px]">
                <ToolButton label="Полужирный"><b>Ж</b></ToolButton>
                <ToolButton label="Курсив"><b className="italic">К</b></ToolButton>
                <ToolButton label="По центру"><LinesIcon lines={centerLines} /></ToolButton>
                <ToolButton label="Цвет заливки"><BucketIcon /></ToolButton>
                <Caret className="w-2.5" />
                <ToolButton label="Цвет текста"><FontColor /></ToolButton>
                <Caret />
                <ToolButton label="Границы"><BordersIcon /></ToolButton>
                <Caret />
                <ToolButton label="Увеличить разрядность"><DecimalIcon /></ToolButton>
                <ToolButton label="Уменьшить разрядность"><DecimalIcon less /></ToolButton>
                <ToolButton label="Формат по образцу"><BrushIcon /></ToolButton>
            </div>
        </div>
    )
}

type MenuItemProps = {
    // the accelerator letter is wrapped in underscores, e.g. "В_ы_резать"
    text: string
    icon?: React.ReactNode
    disabled?: boolean
    submenu?: boolean
    active?: boolean
}

function MenuItem({ text, icon, disabled = false, submenu = false, active = false }: MenuItemProps) {
    const [before, key, after] = text.split('_')
    return (
        <button
            type="button"
            role="menuitem"
            disabled={disabled}
            className={clsx(
                'relative flex h-6 w-full items-center whitespace-nowrap text-left text-xs',
                disabled ? 'text-[#b2b2b2]' : active ? 'bg-[#c6c6c6] text-[#222]' : 'text-[#555]',
            )}
        >
            <span className="flex w-[23px] shrink-0 justify-center">{icon}</span>
            <span className="ml-[9px] flex-1">{before}<u className="underline-offset-2">{key}</u>{after}</span>
            {submenu && (
                <svg className="mr-[9px]" width="4" height="8" viewBox="0 0 4 8" fill="#666"><path d="M0 0v8l4-4z" /></svg>
            )}
            {active && <span className="absolute inset-y-0 -left-0.5 right-px -mb-px rounded-lg border-[3px] border-[#ff0000]" />}
        </button>
    )
}

const MenuSeparator = () => <div className="ml-8 h-0.5 border-t border-[#e0e0e0]" />

function ContextMenu() {
    return (
        <div role="menu" className="absolute left-[223px] top-[287px] z-30 w-[278px] border border-[#c6c6c6] bg-white p-px shadow-sm">
            <MenuItem text="В_ы_резать" icon={<ScissorsIcon />} />
            <MenuItem text="_К_опировать" icon={<CopyIcon />} />
            <div className="flex h-[22px] items-center text-xs font-bold text-[#666]">
                <span className="flex w-[25px] shrink-0 justify-center"><PasteIcon size={16} /></span>
                <span className="flex h-full flex-1 items-center bg-[#ebebeb] pl-2">Параметры вставки:</span>
            </div>
            <div className="flex h-[30px] items-center pl-[29px]">
                <button type="button" aria-label="Вставить" disabled><PasteIcon size={23} /></button>
            </div>
            <MenuItem text="Специальная _в_ставка..." disabled />
            <MenuSeparator />
            <MenuItem text="_И_нтеллектуальный поиск" icon={<SmartLookupIcon />} />
            <MenuSeparator />
            <MenuItem text="Встав_и_ть..." />
            <MenuItem text="_У_далить..." />
            <MenuItem text="Очистить содер_ж_имое" />
            <MenuSeparator />
            <MenuItem text="Экспресс-анали_з_" icon={<QuickAnalysisIcon />} disabled />
            <MenuItem text="_Ф_ильтр" submenu />
            <MenuItem text="_С_ортировка" submenu />
            <MenuSeparator />
            <MenuItem text="Вставить приме_ч_ание" icon={<CommentIcon />} />
            <MenuSeparator />
            <MenuItem text="Формат _я_чеек..." icon={<FormatDialogIcon />} active />
            <MenuItem text="Вы_б_рать из раскрывающегося списка..." />
            <MenuItem text="Присвоит_ь_ имя..." />
            <MenuItem text="Сс_ы_лка" icon={<LinkIcon />} />
        </div>
    )
}

function App() {
    return (
        <div className="relative flex h-screen flex-col overflow-hidden border-x border-b border-[#007540] bg-[#e6e6e6] font-['Open_Sans','Noto_Sans',sans-serif]">
            <header className="shrink-0 bg-[#007540]">
                <TitleBar />
                <RibbonTabs />
            </header>
            <Ribbon />
            <FormulaBar />
            <Sheet />
            <SheetTabs />
            <StatusBar />
            <MiniToolbar />
            <ContextMenu />
        </div>
    )
}

export default App
